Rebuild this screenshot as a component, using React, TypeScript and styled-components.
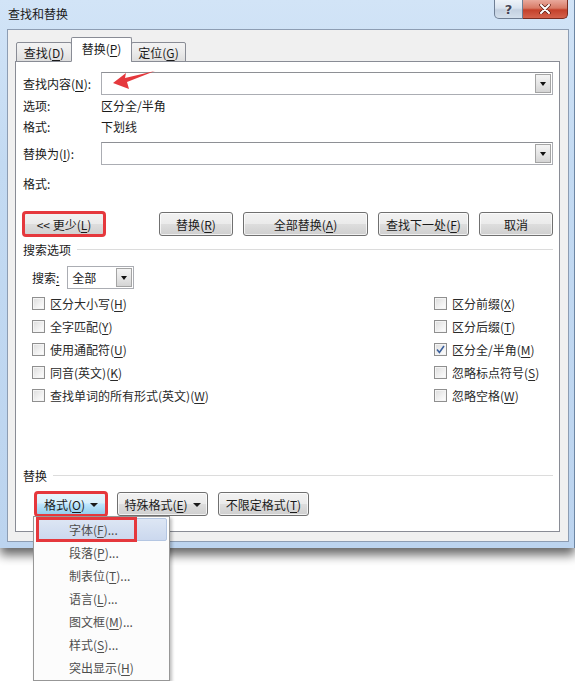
import styled, { createGlobalStyle } from 'styled-components'

const GlobalStyle = createGlobalStyle`
  html, body {
    margin: 0;
    padding: 0;
    background: #ffffff;
  }
  body {
    font-family: "Noto Sans CJK SC", "Noto Sans", sans-serif;
    font-size: 12px;
    color: #1a1a1a;
  }
  * { box-sizing: border-box; }
  u { text-decoration: underline; text-underline-offset: 2px; }
`

const RED = '#e5383d'

/* 页面 */
const Page = styled.div`
  position: relative;
  width: 575px;
  height: 681px;
  overflow: hidden;
  background: #ffffff;
`

/* 窗口外框 (Aero) */
const Window = styled.div`
  width: 575px;
  height: 548px;
  display: flex;
  flex-direction: column;
  background: linear-gradient(180deg, #d2e4f7 0%, #c3daf2 30%, #bcd4ef 100%);
  border-right: 1px solid #6d86a3;
  box-shadow: 0 7px 10px rgba(0, 0, 0, 0.6);
`

const TitleBar = styled.div`
  height: 29px;
  display: flex;
  justify-content: space-between;
  align-items: flex-start;
  padding-left: 8px;
  padding-right: 6px;
`

const Title = styled.div`
  padding-top: 5px;
  font-size: 12px;
  color: #1a1a1a;
`

const CaptionGroup = styled.div`
  display: flex;
`

const CaptionButton = styled.div<{ $close?: boolean }>`
  height: 19px;
  width: ${({ $close }) => ($close ? 45 : 29)}px;
  display: flex;
  align-items: center;
  justify-content: center;
  border: 1px solid ${({ $close }) => ($close ? '#7a2c20' : '#6f7f95')};
  border-top: none;
  border-left: ${({ $close }) => ($close ? 'none' : '1px solid #6f7f95')};
  border-radius: ${({ $close }) => ($close ? '0 0 5px 0' : '0 0 0 5px')};
  background: ${({ $close }) =>
    $close
      ? 'linear-gradient(180deg, #e9a99c 0%, #d87a66 45%, #c4412b 55%, #d4624c 100%)'
      : 'linear-gradient(180deg, #eef3f9 0%, #d9e3ef 45%, #c3d0e0 55%, #d3dfec 100%)'};
  color: #445;
  font-family: "DejaVu Sans", sans-serif;
  font-size: 13px;
  font-weight: bold;
  text-shadow: 0 0 2px #fff;
`

/* 客户区 */
const Client = styled.div`
  flex: 1;
  margin: 0 5px 6px 7px;
  display: flex;
  flex-direction: column;
  background: #f0f0f0;
  border: 1px solid #8d9db3;
  padding: 7px 8px 9px 7px;
`

const TabStrip = styled.div`
  display: flex;
  align-items: flex-end;
  height: 25px;
  margin-left: 1px;
  margin-bottom: -1px;
  position: relative;
  z-index: 1;
`

const Tab = styled.div<{ $active?: boolean; $w: number }>`
  width: ${({ $w }) => $w}px;
  height: ${({ $active }) => ($active ? 25 : 20)}px;
  margin-left: -1px;
  display: flex;
  align-items: center;
  justify-content: center;
  border: 1px solid #898c95;
  border-bottom: ${({ $active }) => ($active ? '1px solid #ffffff' : '1px solid #898c95')};
  border-radius: 2px 2px 0 0;
  background: ${({ $active }) =>
    $active ? '#ffffff' : 'linear-gradient(180deg, #f3f3f3 0%, #ebebeb 50%, #dedede 100%)'};
  padding-bottom: ${({ $active }) => ($active ? 2 : 0)}px;
  &:first-child { margin-left: 0; }
`

const Panel = styled.div`
  flex: 1;
  display: flex;
  flex-direction: column;
  background: #ffffff;
  border: 1px solid #898c95;
  padding: 0 6px 0 7px;
`

/* 输入行 */
const FieldRow = styled.div<{ $top: number }>`
  display: grid;
  grid-template-columns: 78px 1fr;
  align-items: center;
  margin-top: ${({ $top }) => $top}px;
`

const Combo = styled.div`
  height: 23px;
  display: flex;
  justify-content: flex-end;
  align-items: center;
  border: 1px solid #abadb3;
  border-top-color: #8e9095;
  padding: 1px;
  background: #ffffff;
`

const ComboArrow = styled.div<{ $h?: number }>`
  width: 16px;
  height: ${({ $h }) => ($h ? `${$h}px` : '100%')};
  display: flex;
  align-items: center;
  justify-content: center;
  border: 1px solid #a4a4a4;
  background: linear-gradient(180deg, #f4f4f4 0%, #e6e6e6 50%, #d4d4d4 100%);
  &::after {
    content: '';
    border-left: 3.5px solid transparent;
    border-right: 3.5px solid transparent;
    border-top: 4px solid #111;
  }
`

const InfoRow = styled.div<{ $top?: number }>`
  display: grid;
  grid-template-columns: 78px 1fr;
  align-items: center;
  height: 21px;
  margin-top: ${({ $top }) => $top ?? 0}px;
`

/* 按钮 */
const ButtonRow = styled.div`
  display: flex;
  align-items: center;
  margin-top: 18px;
  height: 24px;
`

const ActionGroup = styled.div`
  margin-left: auto;
  display: flex;
  gap: 10px;
`

const Button = styled.div<{ $w: number; $marked?: boolean; $pressed?: boolean }>`
  width: ${({ $w }) => $w}px;
  height: 24px;
  display: flex;
  align-items: center;
  justify-content: center;
  gap: 5px;
  border: 1px solid ${({ $pressed }) => ($pressed ? '#3c7fb1' : '#707070')};
  border-radius: 3px;
  background: ${({ $pressed }) =>
    $pressed
      ? 'linear-gradient(180deg, #e8f5fc 0%, #d9f0fc 45%, #bee6fd 50%, #8fcbeb 100%)'
      : 'linear-gradient(180deg, #f2f2f2 0%, #ebebeb 48%, #dddddd 52%, #cfcfcf 100%)'};
  box-shadow: inset 0 0 0 1px rgba(255, 255, 255, 0.7);
  outline: ${({ $marked }) => ($marked ? `3px solid ${RED}` : 'none')};
  outline-offset: -2px;
  color: #1a1a1a;
`

const Caret = styled.span`
  display: inline-block;
  border-left: 4px solid transparent;
  border-right: 4px solid transparent;
  border-top: 4px solid #1a1a1a;
  margin-top: 1px;
`

/* 分组标题 */
const GroupHeader = styled.div<{ $top: number; $gap: number }>`
  display: flex;
  align-items: center;
  gap: ${({ $gap }) => $gap}px;
  height: 18px;
  margin-top: ${({ $top }) => $top}px;
  &::after {
    content: '';
    flex: 1;
    height: 1px;
    background: #dcdcdc;
  }
`

const SearchRow = styled.div`
  display: flex;
  align-items: center;
  gap: 8px;
  margin-top: 8px;
  padding-left: 9px;
  height: 23px;
`

const Select = styled.div`
  width: 67px;
  height: 23px;
  display: flex;
  align-items: center;
  justify-content: space-between;
  padding: 1px 1px 1px 4px;
  border: 1px solid #abadb3;
  background: #ffffff;
`

const OptionGrid = styled.div`
  display: grid;
  grid-template-columns: 402px 1fr;
  grid-auto-flow: column;
  grid-template-rows: repeat(5, 23px);
  margin-top: 3px;
  padding-left: 9px;
  color: #2a2a2a;
`

const Option = styled.label`
  display: flex;
  align-items: center;
  gap: 5px;
`

const Box = styled.span`
  width: 13px;
  height: 13px;
  display: flex;
  align-items: center;
  justify-content: center;
  border: 1px solid #8f8f8f;
  background: linear-gradient(135deg, #dcdcdc 0%, #f2f2f2 60%, #ffffff 100%);
  box-shadow: inset 0 0 0 1px #f4f4f4;
`

const BottomRow = styled.div`
  display: flex;
  align-items: center;
  gap: 10px;
  margin-top: 8px;
  padding-left: 12px;
`

/* 下拉菜单 */
const Menu = styled.div`
  position: absolute;
  left: 33px;
  top: 516px;
  width: 137px;
  padding: 1px 2px;
  background: #fcfcfc;
  border: 1px solid #979797;
  box-shadow: 2px 2px 3px rgba(0, 0, 0, 0.25);
`

const MenuItem = styled.div<{ $hot?: boolean }>`
  position: relative;
  height: 23px;
  display: flex;
  align-items: center;
  padding-left: 32px;
  color: #4e4e4e;
  border: 1px solid ${({ $hot }) => ($hot ? '#b4c6e2' : 'transparent')};
  border-radius: 2px;
  background: ${({ $hot }) => ($hot ? 'linear-gradient(180deg, #dde6f4 0%, #cbd8ee 100%)' : 'transparent')};
`

const MarkBox = styled.span`
  position: absolute;
  left: -1px;
  top: -2px;
  width: 101px;
  height: 25px;
  border: 3px solid ${RED};
`

const Arrow = styled.svg`
  position: absolute;
  left: 110px;
  top: 68px;
`

const leftOptions = [
  ['区分大小写', 'H'],
  ['全字匹配', 'Y'],
  ['使用通配符', 'U'],
  ['同音(英文)', 'K'],
  ['查找单词的所有形式(英文)', 'W'],
]

const rightOptions: [string, string, boolean][] = [
  ['区分前缀', 'X', false],
  ['区分后缀', 'T', false],
  ['区分全/半角', 'M', true],
  ['忽略标点符号', 'S', false],
  ['忽略空格', 'W', false],
]

const menuItems: [string, string, string][] = [
  ['字体', 'F', '...'],
  ['段落', 'P', '...'],
  ['制表位', 'T', '...'],
  ['语言', 'L', '...'],
  ['图文框', 'M', '...'],
  ['样式', 'S', '...'],
  ['突出显示', 'H', ''],
]

function Key({ label, k }: { label: string; k: string }) {
  return (
    <span>
      {label}(<u>{k}</u>)
    </span>
  )
}

function CheckBox({ checked }: { checked?: boolean }) {
  return (
    <Box>
      {checked && (
        <svg width="9" height="9" viewBox="0 0 9 9">
          <path d="M1 4.6 L3.4 7.4 L8 1" fill="none" stroke="#3a5f9c" strokeWidth="1.6" />
        </svg>
      )}
    </Box>
  )
}

function App() {
  return (
    <Page>
      <GlobalStyle />
      <Window>
        <TitleBar>
          <Title>查找和替换</Title>
          <CaptionGroup>
            <CaptionButton>?</CaptionButton>
            <CaptionButton $close>
              <svg width="12" height="10" viewBox="0 0 12 10">
                <path d="M2 1 L10 9 M10 1 L2 9" stroke="#5a1a10" strokeWidth="3.4" strokeLinecap="round" />
                <path d="M2 1 L10 9 M10 1 L2 9" stroke="#ffffff" strokeWidth="2" strokeLinecap="round" />
              </svg>
            </CaptionButton>
          </CaptionGroup>
        </TitleBar>

        <Client>
          <TabStrip>
            <Tab $w={56}>
              <Key label="查找" k="D" />
            </Tab>
            <Tab $w={61} $active>
              <Key label="替换" k="P" />
            </Tab>
            <Tab $w={55}>
              <Key label="定位" k="G" />
            </Tab>
          </TabStrip>

          <Panel>
            <FieldRow $top={10}>
              <span>
                查找内容(<u>N</u>):
              </span>
              <Combo>
                <ComboArrow />
              </Combo>
            </FieldRow>
            <InfoRow>
              <span>选项:</span>
              <span>区分全/半角</span>
            </InfoRow>
            <InfoRow>
              <span>格式:</span>
              <span>下划线</span>
            </InfoRow>

            <FieldRow $top={5}>
              <span>
                替换为(<u>I</u>):
              </span>
              <Combo>
                <ComboArrow />
              </Combo>
            </FieldRow>
            <InfoRow $top={8}>
              <span>格式:</span>
            </InfoRow>

            <ButtonRow>
              <Button $w={82} $marked>
                <span>
                  &lt;&lt; 更少(<u>L</u>)
                </span>
              </Button>
              <ActionGroup>
                <Button $w={74}>
                  <Key label="替换" k="R" />
                </Button>
                <Button $w={125}>
                  <Key label="全部替换" k="A" />
                </Button>
                <Button $w={91}>
                  <Key label="查找下一处" k="F" />
                </Button>
                <Button $w={74}>取消</Button>
              </ActionGroup>
            </ButtonRow>

            <GroupHeader $top={4} $gap={6}>
              搜索选项
            </GroupHeader>

            <SearchRow>
              <span>
                搜索<u>:</u>
              </span>
              <Select>
                <span>全部</span>
                <ComboArrow $h={19} />
              </Select>
            </SearchRow>

            <OptionGrid>
              {leftOptions.map(([label, k]) => (
                <Option key={label}>
                  <CheckBox />
                  <Key label={label} k={k} />
                </Option>
              ))}
              {rightOptions.map(([label, k, on]) => (
                <Option key={label}>
                  <CheckBox checked={on} />
                  <Key label={label} k={k} />
                </Option>
              ))}
            </OptionGrid>

            <GroupHeader $top={59} $gap={6}>
              替换
            </GroupHeader>

            <BottomRow>
              <Button $w={72} $marked $pressed>
                <Key label="格式" k="O" />
                <Caret />
              </Button>
              <Button $w={91}>
                <Key label="特殊格式" k="E" />
                <Caret />
              </Button>
              <Button $w={91}>
                <Key label="不限定格式" k="T" />
              </Button>
            </BottomRow>
          </Panel>
        </Client>
      </Window>

      <Arrow width="48" height="24" viewBox="0 0 48 24">
        <polygon points="3,15 16,5 15,10 45,3 17,14 19,21" fill={RED} />
      </Arrow>

      <Menu>
        {menuItems.map(([label, k, tail], i) => (
          <MenuItem key={label} $hot={i === 0}>
            <span>
              {label}(<u>{k}</u>){tail}
            </span>
            {i === 0 && <MarkBox />}
          </MenuItem>
        ))}
      </Menu>
    </Page>
  )
}

export default App
